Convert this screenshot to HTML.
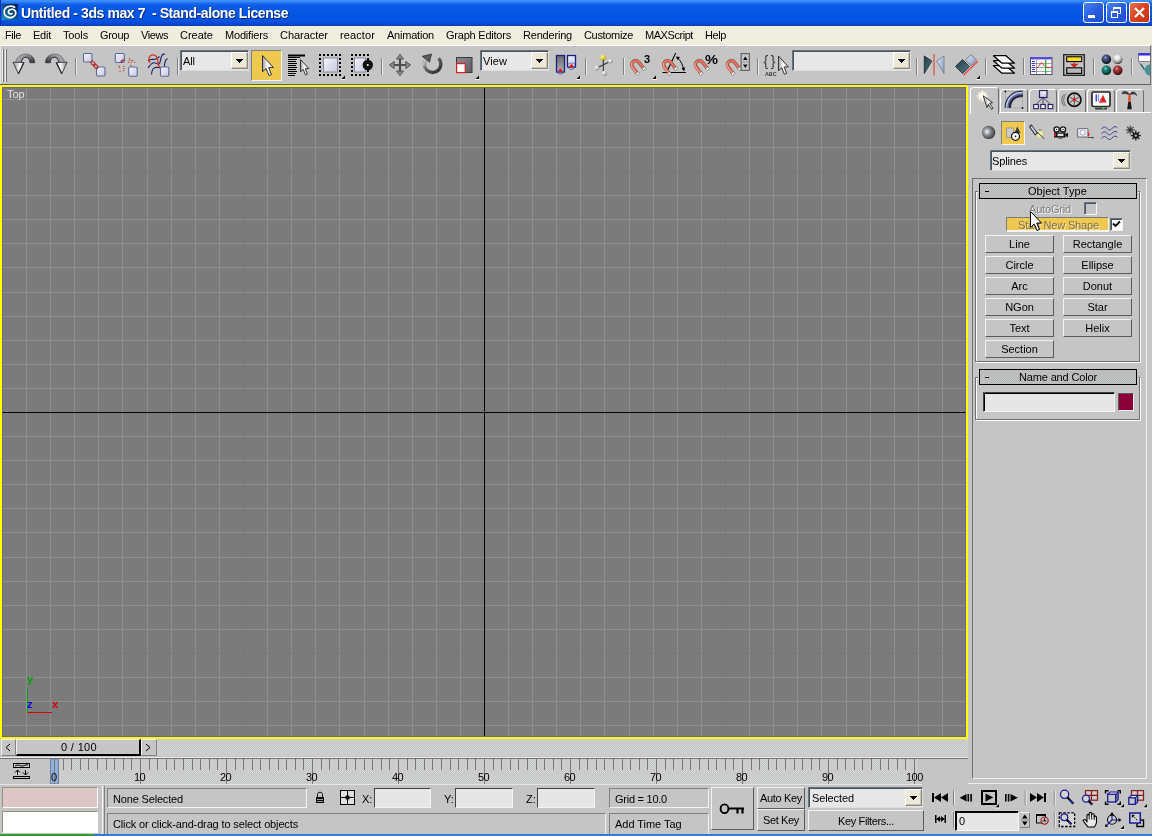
<!DOCTYPE html><html><head><meta charset="utf-8"><title>Untitled - 3ds max 7</title><style>
*{box-sizing:border-box;margin:0;padding:0}
html,body{width:1152px;height:836px;overflow:hidden}
body{background:#c5c5c5;font-family:"Liberation Sans",sans-serif;font-size:11px;color:#000;position:relative}
.a{position:absolute}
.t,.btn,svg{will-change:transform}
.t{position:absolute;white-space:nowrap;line-height:13px;height:13px}
#title{left:0;top:0;width:1152px;height:26px;background:linear-gradient(to bottom,#3f90fc 0,#3888f6 1.5px,#1a68ec 3.5px,#0a5ae6 6px,#0654e2 17px,#0652e2 21px,#0849d0 24px,#0a3cb4 26px);box-shadow:inset 1px 0 0 #0a2cc4}
#title .tt{left:21px;top:5px;font-weight:bold;font-size:13px;color:#fff;line-height:16px;height:16px;text-shadow:1px 1px 0 #0a2a80}
#menu{left:0;top:26px;width:1152px;height:19px;background:#efeddd}
#menu .t{top:3px}
#tb{left:0;top:45px;width:1151px;height:40px;background:#c5c5c5;border-top:1px solid #fff;border-bottom:1px solid #62626e;border-right:1px solid #6e6e6e}
.sep{position:absolute;width:2px;border-left:1px solid #808080;border-right:1px solid #e8e8e8}
.dd{position:absolute;background:#e7e7e7;border:1px solid;border-color:#68707a #dcdcdc #dcdcdc #68707a;box-shadow:inset 1px 1px 0 #4c545e}
.dd .b{position:absolute;right:0;top:1px;bottom:1px;width:17px;background:#ece9d8;border:1px solid;border-color:#fff #8a8878 #8a8878 #fff;box-shadow:inset -1px -1px 0 #c8c4b0}
.dd .b:after{content:"";position:absolute;left:4px;top:6px;width:7px;height:4px;background:linear-gradient(#000,#000) 0 0/7px 1px no-repeat,linear-gradient(#000,#000) 1px 1px/5px 1px no-repeat,linear-gradient(#000,#000) 2px 2px/3px 1px no-repeat,linear-gradient(#000,#000) 3px 3px/1px 1px no-repeat}
.dd .t{left:4px;top:3px}
.btn{position:absolute;background:#c5c5c5;border:1px solid;border-color:#f2f2f2 #5a5a5a #5a5a5a #f2f2f2;text-align:center;line-height:15px;white-space:nowrap}
.fld{position:absolute;background:#e6e6e6;border:1px solid;border-color:#404040 #f4f4f4 #f4f4f4 #404040}
.box{position:absolute;border:1px solid;border-color:#808080 #f2f2f2 #f2f2f2 #808080}
</style></head><body>
<div id="title" class="a"><div class="t" style="left:21px;top:5px;letter-spacing:-0.412px;font-size:14px;font-weight:bold;color:#fff;line-height:17px;height:17px;text-shadow:1px 1px 0 #0a2a80">Untitled - 3ds max 7&nbsp; - Stand-alone License</div>
<svg class="a" style="left:2px;top:4px" width="16" height="16" viewBox="0 0 16 16"><defs><linearGradient id="ig" x1="1" y1="0" x2="0" y2="1"><stop offset="0" stop-color="#0a1658"/><stop offset="0.5" stop-color="#10508a"/><stop offset="1" stop-color="#1c9ab4"/></linearGradient></defs><rect width="16" height="16" fill="url(#ig)"/><path d="M12.5 3.2C10 1.6 5.5 1.8 3.2 4.6 1.2 7.2 2 11.2 5 12.8 8 14.4 12 13.4 13.4 10.6 14.4 8.4 13.4 6 11 5.4 8.6 4.8 6.2 6.2 6.4 8.2 6.6 9.8 8.6 10.4 10 9.6" fill="none" stroke="#fff" stroke-width="1.7" stroke-linecap="round"/></svg>
<div class="a" style="left:1083px;top:2px;width:21px;height:21px;border:1px solid #fff;border-radius:3px;background:linear-gradient(135deg,#4a82f0 0,#2a5fe0 50%,#1f4fd0 100%)"><div class="a" style="left:4px;top:12px;width:7px;height:3px;background:#fff"></div></div><div class="a" style="left:1106px;top:2px;width:21px;height:21px;border:1px solid #fff;border-radius:3px;background:linear-gradient(135deg,#4a82f0 0,#2a5fe0 50%,#1f4fd0 100%)"><svg class="a" style="left:0;top:0" width="19" height="19"><path d="M6.5 7.5V4.5H13.5V10.5H10.5" fill="none" stroke="#fff" stroke-width="1"/><path d="M6 5H14" stroke="#fff" stroke-width="2"/><rect x="4.5" y="8.5" width="6" height="6" fill="none" stroke="#fff"/><path d="M4 9H11" stroke="#fff" stroke-width="2"/></svg></div><div class="a" style="left:1129px;top:2px;width:21px;height:21px;border:1px solid #fff;border-radius:3px;background:linear-gradient(135deg,#e8714f 0,#d8421c 50%,#c2350f 100%)"><svg class="a" style="left:0;top:0" width="19" height="19"><path d="M5 5L14 14M14 5L5 14" stroke="#fff" stroke-width="2.2"/></svg></div>
</div>
<div id="menu" class="a">
<div class="t" style="left:5px;top:3px;letter-spacing:-0.434px;">File</div>
<div class="t" style="left:33px;top:3px;letter-spacing:-0.242px;">Edit</div>
<div class="t" style="left:63px;top:3px;letter-spacing:-0.138px;">Tools</div>
<div class="t" style="left:100px;top:3px;letter-spacing:-0.316px;">Group</div>
<div class="t" style="left:141px;top:3px;letter-spacing:-0.431px;">Views</div>
<div class="t" style="left:180px;top:3px;letter-spacing:-0.005px;">Create</div>
<div class="t" style="left:225px;top:3px;letter-spacing:-0.181px;">Modifiers</div>
<div class="t" style="left:280px;top:3px;letter-spacing:-0.033px;">Character</div>
<div class="t" style="left:340px;top:3px;letter-spacing:0.107px;">reactor</div>
<div class="t" style="left:387px;top:3px;letter-spacing:-0.214px;">Animation</div>
<div class="t" style="left:446px;top:3px;letter-spacing:-0.221px;">Graph Editors</div>
<div class="t" style="left:523px;top:3px;letter-spacing:-0.196px;">Rendering</div>
<div class="t" style="left:584px;top:3px;letter-spacing:-0.330px;">Customize</div>
<div class="t" style="left:645px;top:3px;letter-spacing:-0.441px;">MAXScript</div>
<div class="t" style="left:705px;top:3px;letter-spacing:-0.406px;">Help</div>
</div>
<div id="tb" class="a">
<div class="a" style="left:0;top:0;width:1px;height:38px;background:#e6e6e6"></div><div class="a" style="left:2px;top:3px;width:2px;height:33px;border-left:1px solid #f0f0f0;border-right:1px solid #707070"></div><div class="a" style="left:5px;top:3px;width:2px;height:33px;border-left:1px solid #f0f0f0;border-right:1px solid #707070"></div>
<div class="sep" style="left:75px;top:12px;height:17px"></div>
<div class="sep" style="left:177px;top:12px;height:17px"></div>
<div class="sep" style="left:381px;top:12px;height:17px"></div>
<div class="sep" style="left:585px;top:12px;height:17px"></div>
<div class="sep" style="left:623px;top:12px;height:17px"></div>
<div class="sep" style="left:757px;top:12px;height:17px"></div>
<div class="sep" style="left:916px;top:12px;height:17px"></div>
<div class="sep" style="left:985px;top:12px;height:17px"></div>
<div class="sep" style="left:1023px;top:12px;height:17px"></div>
<div class="sep" style="left:1093px;top:12px;height:17px"></div>
<div class="sep" style="left:1131px;top:12px;height:17px"></div>
<div class="a" style="left:251px;top:4px;width:31px;height:31px;background:#efc84f;border:1px solid;border-color:#808080 #f6f6f6 #f6f6f6 #808080"></div>
</div>
<div class="dd" style="left:180px;top:50px;width:69px;height:21px"><div class="b"></div></div>
<div class="dd" style="left:480px;top:50px;width:69px;height:21px"><div class="b"></div></div>
<div class="dd" style="left:792px;top:50px;width:119px;height:21px"><div class="b"></div></div>
<div class="t" style="left:183px;top:55px;letter-spacing:-0.078px;">All</div>
<div class="t" style="left:483px;top:55px;letter-spacing:0.086px;">View</div>
<svg class="a" style="left:0;top:46px" width="1150" height="38" viewBox="0 46 1150 38">
<defs><linearGradient id="lav" x1="0" y1="0" x2="1" y2="1"><stop offset="0" stop-color="#f4f4fb"/><stop offset="1" stop-color="#c8cae0"/></linearGradient><linearGradient id="curg" x1="0" y1="0" x2="1" y2="0"><stop offset="0" stop-color="#9a9a9a"/><stop offset="0.45" stop-color="#ffffff"/><stop offset="1" stop-color="#d0d0d0"/></linearGradient><linearGradient id="ug" x1="1" y1="0.6" x2="0" y2="0.2"><stop offset="0" stop-color="#3c3c44"/><stop offset="0.35" stop-color="#7a7a80"/><stop offset="0.7" stop-color="#a4a4a8"/><stop offset="1" stop-color="#909094"/></linearGradient><linearGradient id="rg" x1="0" y1="0" x2="1" y2="0"><stop offset="0" stop-color="#3a3a3a"/><stop offset="0.5" stop-color="#7a7a7a"/><stop offset="1" stop-color="#b0b0b0"/></linearGradient><linearGradient id="ahg" x1="0" y1="0" x2="1" y2="0"><stop offset="0" stop-color="#8a8a8a"/><stop offset="0.35" stop-color="#c8c8cc"/><stop offset="0.65" stop-color="#ffffff"/><stop offset="1" stop-color="#9a9a9a"/></linearGradient><linearGradient id="rotg" x1="0" y1="0" x2="1" y2="1"><stop offset="0" stop-color="#b8b8b8"/><stop offset="0.5" stop-color="#5a5a5a"/><stop offset="1" stop-color="#2a2a2a"/></linearGradient><linearGradient id="scg" x1="0" y1="0" x2="1" y2="1"><stop offset="0" stop-color="#8c8c94"/><stop offset="1" stop-color="#5c5c64"/></linearGradient><linearGradient id="pvg" x1="0" y1="0" x2="0" y2="1"><stop offset="0" stop-color="#6a6a6a"/><stop offset="1" stop-color="#b0b0b0"/></linearGradient><radialGradient id="ballw" cx="0.35" cy="0.3" r="0.8"><stop offset="0" stop-color="#fff"/><stop offset="0.6" stop-color="#c0c0c0"/><stop offset="1" stop-color="#606060"/></radialGradient><radialGradient id="bally" cx="0.35" cy="0.3" r="0.8"><stop offset="0" stop-color="#fff8a0"/><stop offset="0.6" stop-color="#e8d020"/><stop offset="1" stop-color="#907800"/></radialGradient><radialGradient id="sph1" cx="0.4" cy="0.32" r="0.7"><stop offset="0" stop-color="#b0bce8"/><stop offset="0.2" stop-color="#52608e"/><stop offset="0.6" stop-color="#2c3654"/><stop offset="1" stop-color="#0a0c14"/></radialGradient><radialGradient id="sph2" cx="0.42" cy="0.3" r="0.72"><stop offset="0" stop-color="#ffffff"/><stop offset="0.4" stop-color="#e0e0e0"/><stop offset="0.75" stop-color="#8a8a8a"/><stop offset="1" stop-color="#1a1a1a"/></radialGradient><radialGradient id="sph3" cx="0.4" cy="0.32" r="0.7"><stop offset="0" stop-color="#66e4d4"/><stop offset="0.25" stop-color="#1e8c7e"/><stop offset="0.65" stop-color="#0e5a50"/><stop offset="1" stop-color="#021814"/></radialGradient><radialGradient id="sph4" cx="0.4" cy="0.32" r="0.7"><stop offset="0" stop-color="#ff9a9a"/><stop offset="0.25" stop-color="#b04040"/><stop offset="0.65" stop-color="#742424"/><stop offset="1" stop-color="#1c0404"/></radialGradient><linearGradient id="teal" x1="0" y1="0" x2="1" y2="1"><stop offset="0" stop-color="#1c3a44"/><stop offset="1" stop-color="#5a8088"/></linearGradient><linearGradient id="ltb" x1="0" y1="0" x2="1" y2="1"><stop offset="0" stop-color="#e0e8f8"/><stop offset="1" stop-color="#8a9ab8"/></linearGradient></defs>
<g><path d="M34.900 62.900C34.900 57.500 31 54 25.700 54C20.500 54 16.500 57.500 15.500 62.500L21.300 62.600C21.600 59.500 23.200 57.200 25.700 57.200C28.500 57.200 30.100 59.500 30.100 62.900Z" fill="url(#ug)" stroke="#4a4a52" stroke-width="0.500"/><path d="M21.300 62.600C21.600 59.500 23.200 57.200 25.700 57.200C28.500 57.200 30.100 59.500 30.100 62.900" fill="none" stroke="#2a2a30" stroke-width="0.900"/><path d="M13 62.200L24 62.500L18.400 73.800Z" fill="url(#ahg)" stroke="#3a3a40" stroke-width="0.900" stroke-linejoin="round"/><path d="M24 62.500L18.400 73.800" stroke="#222" stroke-width="1.100"/></g>
<g transform="translate(80.2 0) scale(-1 1)"><path d="M34.900 62.900C34.900 57.500 31 54 25.700 54C20.500 54 16.500 57.500 15.500 62.500L21.300 62.600C21.600 59.500 23.200 57.200 25.700 57.200C28.500 57.200 30.100 59.500 30.100 62.900Z" fill="url(#ug)" stroke="#4a4a52" stroke-width="0.500"/><path d="M21.300 62.600C21.600 59.500 23.200 57.200 25.700 57.200C28.500 57.200 30.100 59.500 30.100 62.900" fill="none" stroke="#2a2a30" stroke-width="0.900"/><path d="M13 62.200L24 62.500L18.400 73.800Z" fill="url(#ahg)" stroke="#3a3a40" stroke-width="0.900" stroke-linejoin="round"/><path d="M24 62.500L18.400 73.800" stroke="#222" stroke-width="1.100"/></g>
<rect x="83.5" y="53.5" width="8.5" height="8.5" rx="1.200" fill="url(#lav)" stroke="#5a6898" stroke-width="1.100"/><rect x="96.5" y="67" width="8.5" height="9" rx="1.200" fill="url(#lav)" stroke="#5a6898" stroke-width="1.100"/>
<g fill="none" stroke="#b02828" stroke-width="1.100"><ellipse cx="93" cy="63.300" rx="2.600" ry="1.500" transform="rotate(48 93 63.300)"/><ellipse cx="95.800" cy="66.400" rx="2.600" ry="1.500" transform="rotate(48 95.800 66.400)"/></g>
<rect x="115.3" y="53.5" width="9" height="9" rx="1.200" fill="url(#lav)" stroke="#5a6898" stroke-width="1.100"/><rect x="128.7" y="67" width="8.5" height="9.3" rx="1.200" fill="url(#lav)" stroke="#5a6898" stroke-width="1.100"/>
<path d="M121 62.500C121.500 60.500 123 60 124.500 60.500" fill="none" stroke="#a02828" stroke-width="1.600"/>
<rect x="129.0" y="58.0" width="1.100" height="1.100" fill="#c03030"/>
<rect x="131.3" y="60.0" width="1.100" height="1.100" fill="#c03030"/>
<rect x="127.80000000000001" y="61.7" width="1.100" height="1.100" fill="#c03030"/>
<rect x="130.5" y="61.8" width="1.100" height="1.100" fill="#c03030"/>
<rect x="134.0" y="61.8" width="1.100" height="1.100" fill="#c03030"/>
<rect x="130.3" y="64.8" width="1.100" height="1.100" fill="#c03030"/>
<rect x="119.0" y="67.0" width="1.100" height="1.100" fill="#c03030"/>
<rect x="123.3" y="66.0" width="1.100" height="1.100" fill="#c03030"/>
<rect x="123.7" y="68.0" width="1.100" height="1.100" fill="#c03030"/>
<rect x="123.0" y="70.0" width="1.100" height="1.100" fill="#c03030"/>
<rect x="119.5" y="70.8" width="1.100" height="1.100" fill="#c03030"/>
<rect x="118.5" y="65.5" width="1.100" height="1.100" fill="#c03030"/>
<rect x="128.8" y="59.7" width="1.100" height="1.100" fill="#c03030"/>
<rect x="132.3" y="59.9" width="1.100" height="1.100" fill="#c03030"/>
<rect x="160.5" y="67" width="8.3" height="9.3" rx="1.200" fill="url(#lav)" stroke="#5a6898" stroke-width="1.100"/>
<path d="M148 61C150.500 58.500 153 59.800 155 59.300S158 57.500 159.500 56.500M148 68C150 65.500 151.500 62.800 154 62.700S157 64.300 158.500 64.300 160 62 161 58 162.500 54.500 165 54M151.500 74.500C152 71 152 68.500 154.500 67.700S158 67.700 160 67.700M164.500 66.500C164.500 62 165 60 167.500 58.500" fill="none" stroke="#1a1f6a" stroke-width="1.100"/>
<path d="M156.500 56.800C155 54 150.500 54.500 149.300 57.300S149.500 61.500 150 63M156.500 56.800C158.500 59 157.500 62 158.500 65.500L160 67" fill="none" stroke="#d83020" stroke-width="1.300"/>
<path d="M262.50 55.50L262.50 71.78L266.07 68.52L269.01 75.66L271.53 74.61L268.69 67.68L273.42 67.47Z" fill="url(#curg)" stroke="#333" stroke-width="1" stroke-linejoin="round"/>
<rect x="288" y="54.500" width="17" height="2" fill="#000"/>
<path d="M288 57.5H300M288 59.5H297M288 61.5H296M288 63.5H297M288 65.5H296M288 67.5H297M288 69.5H296M288 71.5H297M288 73.5H296M288 75.5H295" stroke="#000" stroke-width="1.100" fill="none"/>
<path d="M300.50 59.50L300.50 71.90L303.22 69.42L305.46 74.86L307.38 74.06L305.22 68.78L308.82 68.62Z" fill="url(#curg)" stroke="#333" stroke-width="1" stroke-linejoin="round"/>
<path d="M319 54h2v2h-2zM319 74h2v2h-2zM323 54h2v2h-2zM323 74h2v2h-2zM327 54h2v2h-2zM327 74h2v2h-2zM331 54h2v2h-2zM331 74h2v2h-2zM335 54h2v2h-2zM335 74h2v2h-2zM339 54h2v2h-2zM339 74h2v2h-2zM319 58h2v2h-2zM339 58h2v2h-2zM319 62h2v2h-2zM339 62h2v2h-2zM319 66h2v2h-2zM339 66h2v2h-2zM319 70h2v2h-2zM339 70h2v2h-2z" fill="#000" shape-rendering="crispEdges"/>
<rect x="323.500" y="58" width="14" height="14" fill="url(#lav)" stroke="#8a8aa0" stroke-width="1"/>
<path d="M345 79L345 75.5L341.5 79Z" fill="#000"/><path d="M341.2 79.5L345.5 79.5" stroke="#fff" stroke-width="0.8"/>
<path d="M351 54h2v2h-2zM351 74h2v2h-2zM355 54h2v2h-2zM355 74h2v2h-2zM359 54h2v2h-2zM359 74h2v2h-2zM363 54h2v2h-2zM363 74h2v2h-2zM367 54h2v2h-2zM367 74h2v2h-2zM351 58h2v2h-2zM367 58h2v2h-2zM351 62h2v2h-2zM367 62h2v2h-2zM351 66h2v2h-2zM367 66h2v2h-2zM351 70h2v2h-2zM367 70h2v2h-2z" fill="#000" shape-rendering="crispEdges"/>
<rect x="354.500" y="58" width="11" height="14" fill="url(#lav)" stroke="#8a8aa0" stroke-width="1"/>
<circle cx="367.800" cy="65" r="3.100" fill="#fff" stroke="#111" stroke-width="4.200"/>
<path d="M400 56V74M391 65H409" stroke="#4e4e4e" stroke-width="2.200" fill="none"/>
<path d="M400 54.300L403.500 59H396.500ZM400 75.700L403.500 71H396.500ZM389.500 65L394.200 61.500V68.500ZM410.500 65L405.800 61.500V68.500Z" fill="#8c8c8c" stroke="#4a4a4a" stroke-width="0.900" stroke-linejoin="round"/>
<path d="M426.500 58.500A8.300 8.300 0 1 0 438.500 58.300" fill="none" stroke="url(#rotg)" stroke-width="3.400"/>
<path d="M426.500 58.500A8.300 8.300 0 0 0 424 66" fill="none" stroke="#c8c8c8" stroke-width="1.200"/>
<path d="M422.300 56.300L431.500 54L429.500 62.200Z" fill="#5a5a5a" stroke="#333" stroke-width="0.800"/>
<rect x="456.500" y="57.500" width="15.500" height="15" fill="url(#scg)" stroke="#3a3a3a" stroke-width="1"/>
<rect x="456.600" y="63.600" width="8.600" height="9" fill="#fff" stroke="#d82020" stroke-width="1.200"/>
<path d="M479 79L479 75.5L475.5 79Z" fill="#000"/><path d="M475.2 79.5L479.5 79.5" stroke="#fff" stroke-width="0.8"/>

<rect x="556.500" y="55.500" width="8" height="16.500" fill="url(#pvg)" stroke="#1a1f80" stroke-width="1.300"/>
<path d="M556.500 71C558 75 563 75 564.500 71" fill="none" stroke="#3a4aa0" stroke-width="0.800"/>
<rect x="567.500" y="55.500" width="8" height="11.500" fill="url(#lav)" stroke="#1a1f80" stroke-width="1.300"/>
<path d="M567.500 66C569 70.500 574 70.500 575.500 66M568 64.500C570 62.500 573 62.500 575 64.500" fill="none" stroke="#3a4aa0" stroke-width="0.800"/>
<circle cx="560.500" cy="70.500" r="1.700" fill="#e81818"/><circle cx="571.500" cy="66" r="1.700" fill="#e81818"/>
<path d="M580 79L580 75.5L576.5 79Z" fill="#000"/><path d="M576.2 79.5L580.5 79.5" stroke="#fff" stroke-width="0.8"/>
<path d="M603.300 58V73M597 68L610 61.500" stroke="#333" stroke-width="1.100" fill="none"/>
<circle cx="603" cy="57.500" r="2.700" fill="url(#bally)"/><circle cx="610.300" cy="61.300" r="2.300" fill="url(#ballw)"/><circle cx="596.800" cy="68" r="2.400" fill="url(#ballw)"/><circle cx="604.300" cy="73.300" r="2.500" fill="url(#ballw)"/>
<g transform="translate(634.3 62.9) rotate(-38) scale(0.88)"><path d="M-4.500 11V2.500A4.500 4.500 0 0 1 4.500 2.500V11" fill="none" stroke="#8a3a30" stroke-width="3.800"/><path d="M-4.500 11V2.500A4.500 4.500 0 0 1 4.500 2.500V11" fill="none" stroke="#e87462" stroke-width="2.500"/><path d="M-5.200 10V2.500A5.200 5.200 0 0 1 -2 -2" fill="none" stroke="#f6b0a0" stroke-width="1"/><rect x="-6.300" y="10.500" width="3.600" height="2.600" fill="#fff" stroke="#555" stroke-width="0.600"/><rect x="2.700" y="10.500" width="3.600" height="2.600" fill="#fff" stroke="#555" stroke-width="0.600"/></g>
<path d="M656 79L656 75.5L652.5 79Z" fill="#000"/><path d="M652.2 79.5L656.5 79.5" stroke="#fff" stroke-width="0.8"/>
<text x="644" y="62.500" font-family="Liberation Sans,sans-serif" font-size="11" font-weight="bold" fill="#000">3</text>
<path d="M662.500 72.500H686M666.500 72.500L675.700 53" stroke="#000" stroke-width="1.100" fill="none"/><path d="M677.500 58C681 61 683 65 683.500 69.500" stroke="#000" stroke-width="1" fill="none"/><path d="M676 56.500L680 57L677.500 60ZM684 71.500L681.500 68L685.300 67.500Z" fill="#000"/>
<g transform="translate(666.2 62.9) rotate(-38) scale(0.88)"><path d="M-4.500 11V2.500A4.500 4.500 0 0 1 4.500 2.500V11" fill="none" stroke="#8a3a30" stroke-width="3.800"/><path d="M-4.500 11V2.500A4.500 4.500 0 0 1 4.500 2.500V11" fill="none" stroke="#e87462" stroke-width="2.500"/><path d="M-5.200 10V2.500A5.200 5.200 0 0 1 -2 -2" fill="none" stroke="#f6b0a0" stroke-width="1"/><rect x="-6.300" y="10.500" width="3.600" height="2.600" fill="#fff" stroke="#555" stroke-width="0.600"/><rect x="2.700" y="10.500" width="3.600" height="2.600" fill="#fff" stroke="#555" stroke-width="0.600"/></g>
<g transform="translate(698.0 62.9) rotate(-38) scale(0.88)"><path d="M-4.500 11V2.500A4.500 4.500 0 0 1 4.500 2.500V11" fill="none" stroke="#8a3a30" stroke-width="3.800"/><path d="M-4.500 11V2.500A4.500 4.500 0 0 1 4.500 2.500V11" fill="none" stroke="#e87462" stroke-width="2.500"/><path d="M-5.200 10V2.500A5.200 5.200 0 0 1 -2 -2" fill="none" stroke="#f6b0a0" stroke-width="1"/><rect x="-6.300" y="10.500" width="3.600" height="2.600" fill="#fff" stroke="#555" stroke-width="0.600"/><rect x="2.700" y="10.500" width="3.600" height="2.600" fill="#fff" stroke="#555" stroke-width="0.600"/></g>
<text x="705" y="63.800" font-family="Liberation Sans,sans-serif" font-size="13.500" textLength="13" lengthAdjust="spacingAndGlyphs" font-weight="bold" fill="#000">%</text>
<g transform="translate(730.0 62.9) rotate(-38) scale(0.88)"><path d="M-4.500 11V2.500A4.500 4.500 0 0 1 4.500 2.500V11" fill="none" stroke="#8a3a30" stroke-width="3.800"/><path d="M-4.500 11V2.500A4.500 4.500 0 0 1 4.500 2.500V11" fill="none" stroke="#e87462" stroke-width="2.500"/><path d="M-5.200 10V2.500A5.200 5.200 0 0 1 -2 -2" fill="none" stroke="#f6b0a0" stroke-width="1"/><rect x="-6.300" y="10.500" width="3.600" height="2.600" fill="#fff" stroke="#555" stroke-width="0.600"/><rect x="2.700" y="10.500" width="3.600" height="2.600" fill="#fff" stroke="#555" stroke-width="0.600"/></g>
<rect x="741" y="53.500" width="8.500" height="17" fill="#9a9a9a" stroke="#555" stroke-width="0.800"/><rect x="742" y="54.500" width="6.500" height="7" fill="#c8c8c8"/><rect x="742" y="62.500" width="6.500" height="7" fill="#c8c8c8"/><path d="M743 60L745.300 56.500L747.600 60ZM743 64.500L745.300 68L747.600 64.500Z" fill="#000"/>
<text x="763.500" y="66" font-family="Liberation Sans,sans-serif" font-size="14" fill="#3a3a3a" letter-spacing="2.5">{}</text>
<text x="765" y="75.500" font-family="Liberation Sans,sans-serif" font-size="6" font-weight="bold" fill="#3a3a3a" textLength="11.500" lengthAdjust="spacingAndGlyphs">ABC</text>
<path d="M778.50 56.00L778.50 70.72L781.73 67.78L784.39 74.24L786.67 73.29L784.11 67.02L788.38 66.83Z" fill="url(#curg)" stroke="#333" stroke-width="1" stroke-linejoin="round"/>
<path d="M924.300 56V73.500L931.800 61Z" fill="url(#teal)" stroke="#10242a" stroke-width="0.800"/>
<path d="M944 56V73.500L936.600 61Z" fill="url(#ltb)" stroke="#6a7a90" stroke-width="0.800"/>
<path d="M934 54V75.500" stroke="#e05050" stroke-width="1.300"/>
<path d="M962.500 59.500L969.500 66.500L962.500 73.500L955.500 66.500Z" fill="url(#teal)" stroke="#16282e" stroke-width="0.800"/>
<path d="M971 54.500L976.500 60L971 65.500L965.500 60Z" fill="url(#ltb)" stroke="#55657a" stroke-width="0.800"/>
<path d="M963.500 75.300L977.800 61.200" stroke="#f04040" stroke-width="1.300"/>
<path d="M980 79L980 75.5L976.5 79Z" fill="#000"/><path d="M976.2 79.5L980.5 79.5" stroke="#fff" stroke-width="0.8"/>
<path d="M993.500 65.7H1006L1014.500 73.2H1002Z" fill="#fff" stroke="#000" stroke-width="1.300" stroke-linejoin="round"/>
<path d="M993.500 60.7H1006L1014.500 68.2H1002Z" fill="#fff" stroke="#000" stroke-width="1.300" stroke-linejoin="round"/>
<path d="M993.500 55.7H1006L1014.500 63.2H1002Z" fill="#fff" stroke="#000" stroke-width="1.300" stroke-linejoin="round"/>
<rect x="1030.500" y="57.500" width="21.500" height="17" fill="#fff" stroke="#4a4a6a" stroke-width="1"/>
<rect x="1030.500" y="57" width="21.500" height="2.400" fill="#5a48e0"/>
<path d="M1036.500 59.500V74M1031 63.500H1052M1031 67.500H1052M1031 71.500H1052" stroke="#7a7a8a" stroke-width="0.700" fill="none"/>
<path d="M1032 61.500H1035M1032 63.500H1035M1032 65.500H1035M1032 67.500H1035M1032 69.500H1035M1032 71.500H1035" stroke="#2a2ad0" stroke-width="0.900"/>
<path d="M1037 68L1041.500 62.500L1045 66.500L1048 67.500H1052" stroke="#d83030" stroke-width="1" fill="none"/>
<path d="M1045.700 59.500V74" stroke="#20b020" stroke-width="1.200"/>
<rect x="1063.700" y="54.700" width="20.600" height="20.600" fill="#c5c5c5" stroke="#2a2a2a" stroke-width="1.400"/>
<rect x="1066.700" y="56.800" width="15" height="4.800" fill="#ffe020" stroke="#000" stroke-width="1.100"/>
<rect x="1066.700" y="67.800" width="15" height="5.600" fill="#b8b8b8" stroke="#000" stroke-width="1.100"/>
<path d="M1074.200 62.500V65M1071.500 64.300H1077L1074.200 67Z" stroke="#d02020" stroke-width="1.200" fill="#d02020"/>
<circle cx="1106.400" cy="59.300" r="4.800" fill="url(#sph1)"/><circle cx="1117.700" cy="59.300" r="4.800" fill="url(#sph2)"/><circle cx="1106.400" cy="70.300" r="4.800" fill="url(#sph3)"/><circle cx="1117.700" cy="70.300" r="4.800" fill="url(#sph4)"/>
<rect x="1138.500" y="53.500" width="14" height="8" fill="#fff" stroke="#6a6a7a" stroke-width="0.800"/><rect x="1138.500" y="53.200" width="14" height="2.300" fill="#3a28e0"/>
<path d="M1141 64.500C1142.500 66 1143 68 1144.500 69.500" stroke="#2a5a60" stroke-width="1.500" fill="none"/><ellipse cx="1152" cy="70" rx="7.500" ry="6" fill="#4a9098"/><path d="M1141 64.500L1139.500 63.500" stroke="#2a5a60" stroke-width="1"/>
</svg>
<div class="a" style="left:0;top:85px;width:968px;height:654px;background:#ffff00"></div>
<svg class="a" style="left:2px;top:87px" width="964" height="650" viewBox="2 87 964 650" shape-rendering="crispEdges"><rect x="2" y="87" width="964" height="650" fill="#7b7b7b"/><path d="M26.5 87V737M50.5 87V737M74.5 87V737M98.5 87V737M122.5 87V737M147.5 87V737M171.5 87V737M195.5 87V737M219.5 87V737M267.5 87V737M291.5 87V737M315.5 87V737M339.5 87V737M364.5 87V737M388.5 87V737M412.5 87V737M436.5 87V737M460.5 87V737M508.5 87V737M532.5 87V737M556.5 87V737M580.5 87V737M604.5 87V737M629.5 87V737M653.5 87V737M677.5 87V737M701.5 87V737M749.5 87V737M773.5 87V737M797.5 87V737M821.5 87V737M846.5 87V737M870.5 87V737M894.5 87V737M918.5 87V737M942.5 87V737M2 99.5H966M2 123.5H966M2 147.5H966M2 195.5H966M2 219.5H966M2 243.5H966M2 267.5H966M2 292.5H966M2 316.5H966M2 340.5H966M2 364.5H966M2 388.5H966M2 436.5H966M2 460.5H966M2 484.5H966M2 508.5H966M2 532.5H966M2 557.5H966M2 581.5H966M2 605.5H966M2 629.5H966M2 677.5H966M2 701.5H966M2 725.5H966" stroke="#8f8f8f" stroke-width="1" fill="none"/><path d="M2.5 87V737M243.5 87V737M725.5 87V737M2 171.5H966M2 653.5H966" stroke="#77747f" stroke-width="1" fill="none" stroke-dasharray="2 1"/><path d="M484.5 87V737M2 412.5H966" stroke="#000" stroke-width="1" fill="none"/><path d="M2.5 87V737M2 87.5H966M965.5 87V737M2 736.5H966" stroke="#6c6c80" stroke-width="1" fill="none"/></svg>
<div class="t" style="left:7px;top:88px;color:#e0e0e0">Top</div>
<svg class="a" style="left:24px;top:674px" width="40" height="44" viewBox="24 674 40 44" shape-rendering="crispEdges"><path d="M27.5 688V713" stroke="#00a000" fill="none"/><path d="M28 712.5H52" stroke="#d40000" fill="none"/></svg>
<div class="t" style="left:27px;top:673px;letter-spacing:-1.125px;font-weight:bold;color:#00a000">y</div><div class="t" style="left:27px;top:698px;letter-spacing:-0.500px;font-weight:bold;color:#0000dc">z</div><div class="t" style="left:52px;top:698px;letter-spacing:-1.125px;font-weight:bold;color:#d40000">x</div>
<div class="a" style="left:972px;top:178px;width:175px;height:601px;border:1px solid;border-color:#707070 #f0f0f0 #f0f0f0 #707070"></div>
<div class="a" style="left:999px;top:112px;width:152px;height:1px;background:#fff"></div>
<div class="a" style="left:970px;top:87px;width:29px;height:27px;background:#c5c5c5;border:1px solid;border-color:#fff #6e6e6e transparent #fff;border-radius:4px 4px 0 0;border-bottom:0"></div>
<div class="a" style="left:1000px;top:89px;width:28px;height:23px;border:1px solid;border-color:#fff #6e6e6e transparent #fff;border-radius:4px 4px 0 0;border-bottom:0"></div>
<div class="a" style="left:1029px;top:89px;width:28px;height:23px;border:1px solid;border-color:#fff #6e6e6e transparent #fff;border-radius:4px 4px 0 0;border-bottom:0"></div>
<div class="a" style="left:1058px;top:89px;width:28px;height:23px;border:1px solid;border-color:#fff #6e6e6e transparent #fff;border-radius:4px 4px 0 0;border-bottom:0"></div>
<div class="a" style="left:1087px;top:89px;width:28px;height:23px;border:1px solid;border-color:#fff #6e6e6e transparent #fff;border-radius:4px 4px 0 0;border-bottom:0"></div>
<div class="a" style="left:1116px;top:89px;width:28px;height:23px;border:1px solid;border-color:#fff #6e6e6e transparent #fff;border-radius:4px 4px 0 0;border-bottom:0"></div>
<div class="a" style="left:1001px;top:121px;width:24px;height:24px;background:#efc84f;border:1px solid;border-color:#808080 #f4f4f4 #f4f4f4 #808080"></div>
<svg class="a" style="left:968px;top:86px" width="184" height="62" viewBox="968 86 184 62">
<defs><radialGradient id="spark" cx="0.5" cy="0.5" r="0.5"><stop offset="0" stop-color="#ffffff"/><stop offset="0.5" stop-color="#fffbe0" stop-opacity="0.9"/><stop offset="1" stop-color="#f0e8c0" stop-opacity="0"/></radialGradient><linearGradient id="tube" x1="0" y1="0" x2="1" y2="1"><stop offset="0" stop-color="#c0c8e8"/><stop offset="0.35" stop-color="#6a78a8"/><stop offset="0.7" stop-color="#1c2240"/><stop offset="1" stop-color="#5a6898"/></linearGradient><radialGradient id="gsph" cx="0.38" cy="0.44" r="0.62"><stop offset="0" stop-color="#ffffff"/><stop offset="0.18" stop-color="#c4c8d0"/><stop offset="0.5" stop-color="#7e8286"/><stop offset="0.85" stop-color="#505050"/><stop offset="1" stop-color="#3a3a3a"/></radialGradient><radialGradient id="glow" cx="0.5" cy="0.5" r="0.5"><stop offset="0" stop-color="#fffce0"/><stop offset="0.6" stop-color="#f4ec90" stop-opacity="0.9"/><stop offset="1" stop-color="#e8e080" stop-opacity="0"/></radialGradient><linearGradient id="lav2" x1="0" y1="0" x2="0" y2="1"><stop offset="0" stop-color="#f4f4fb"/><stop offset="1" stop-color="#c4c6dc"/></linearGradient><linearGradient id="curg2" x1="0" y1="0" x2="1" y2="0"><stop offset="0" stop-color="#b0b0b0"/><stop offset="0.5" stop-color="#ffffff"/><stop offset="1" stop-color="#d8d8d8"/></linearGradient></defs>
<circle cx="982.500" cy="96" r="6" fill="url(#spark)"/>
<path d="M982.500 90V102M976.500 96H988.500M978.500 92L986.500 100M986.500 92L978.500 100" stroke="#fffdf0" stroke-width="0.900" opacity="0.900"/>
<g transform="translate(983.2 95.8) rotate(-18) scale(0.8 1)"><path d="M0.00 0.00L0.00 12.40L2.72 9.92L4.96 15.36L6.88 14.56L4.72 9.28L8.32 9.12Z" fill="url(#curg2)" stroke="#333" stroke-width="1" stroke-linejoin="round"/></g>
<rect x="1005.500" y="91.500" width="17" height="16.500" fill="none" stroke="#6a6a6a" stroke-width="0.500" stroke-dasharray="1 1"/>
<rect x="1004.500" y="90.700" width="1.600" height="1.600" fill="#000"/><rect x="1021.700" y="107.200" width="1.600" height="1.600" fill="#000"/>
<path d="M1007.800 107.800C1007.800 99 1014 93.800 1022.700 93.800" fill="none" stroke="#181c30" stroke-width="6.400"/>
<path d="M1007.800 107.800C1007.800 99 1014 93.800 1022.700 93.800" fill="none" stroke="#5a6490" stroke-width="4.800"/>
<path d="M1006.600 107.800C1006.600 98.300 1013.300 92.500 1022.700 92.500" fill="none" stroke="#c0c8e8" stroke-width="1.500"/>
<path d="M1009.600 107.800C1009.600 100.500 1015 95.600 1022.700 95.600" fill="none" stroke="#1c2038" stroke-width="1.400"/>
<path d="M1043 97.500L1036 104.500M1043 97.500V104.500M1043 97.500L1050.500 104.500" stroke="#2a2060" stroke-width="0.800" fill="none"/>
<rect x="1039.500" y="90.500" width="7.500" height="7" fill="url(#lav2)" stroke="#2a2060" stroke-width="1.200"/>
<rect x="1033.7" y="104.500" width="4.600" height="4.200" fill="#f0f0f8" stroke="#2a2060" stroke-width="1.100"/>
<rect x="1040.7" y="104.500" width="4.600" height="4.200" fill="#f0f0f8" stroke="#2a2060" stroke-width="1.100"/>
<rect x="1048.2" y="104.500" width="4.600" height="4.200" fill="#f0f0f8" stroke="#2a2060" stroke-width="1.100"/>
<path d="M1066 93.500C1063 97 1063 103 1066 106.500M1063.500 94.500C1061.300 98 1061.300 102 1063.500 105.500" stroke="#555" stroke-width="0.800" fill="none"/>
<circle cx="1074.300" cy="99.800" r="6.600" fill="#c8c8c8" stroke="#111" stroke-width="1.700"/>
<path d="M1074.300 94.500V105M1069.700 97.200L1078.900 102.400M1069.700 102.400L1078.900 97.200" stroke="#333" stroke-width="0.800"/>
<circle cx="1074.300" cy="99.800" r="1.700" fill="#e02020"/>
<rect x="1092" y="92" width="18" height="14.500" rx="1.500" fill="#fff" stroke="#2a2a2a" stroke-width="1.700"/>
<rect x="1095.500" y="94.500" width="1.500" height="7" fill="#3a4ae0"/><rect x="1097.800" y="94.500" width="1.300" height="7" fill="#8a98f0"/>
<path d="M1103 94.800L1106.500 102.500H1099.300Z" fill="#e82020"/><path d="M1101 98L1103 102.500H1099Z" fill="#f04040"/>
<rect x="1095" y="107.700" width="12" height="1.800" fill="#3a3a3a"/><rect x="1102" y="107.600" width="2.400" height="1.400" fill="#20d040"/>
<path d="M1122.300 92.500C1123.500 91 1126 91.200 1127.500 92.300L1131.500 92.300C1134 91.500 1136 92.500 1136.800 95.500C1135 93.800 1133.500 93.800 1131.500 94.300L1127.500 94.300C1126 93.300 1124 93.300 1122.300 94Z" fill="#3a3a48" stroke="#2a2a34" stroke-width="0.600"/>
<rect x="1128.400" y="91.200" width="2.400" height="2" fill="#e8e8e8"/>
<path d="M1128.400 94.300H1130.600L1130.800 102H1128.200Z" fill="#e04a20"/>
<path d="M1128.200 102H1130.800L1131.800 109.300H1127.200Z" fill="#181818"/>
<circle cx="988.600" cy="132.400" r="6.700" fill="url(#gsph)"/>
<rect x="1006.500" y="128" width="7" height="9.500" fill="#c8c8d0" stroke="#8a8a6a" stroke-width="0.700"/>
<path d="M1017.300 126.500L1020.500 133H1014.500Z" fill="#3a3a48"/>
<circle cx="1015.500" cy="136.300" r="4" fill="#fff" stroke="#111" stroke-width="1.200"/><circle cx="1015.500" cy="136.300" r="0.800" fill="#000"/>
<circle cx="1039.500" cy="134" r="4.500" fill="url(#glow)"/>
<path d="M1030.500 126L1036.500 134.500" stroke="#2a2a3a" stroke-width="3.600"/><path d="M1031 126.500L1036 133.500" stroke="#d0d4e8" stroke-width="1.800"/>
<path d="M1029.500 126.500L1032 124.800" stroke="#2a2a3a" stroke-width="1.200"/>
<path d="M1036 131L1044.300 138.800" stroke="#2a2a3a" stroke-width="0.900"/><path d="M1038.500 130H1041.500" stroke="#6a6a90" stroke-width="1"/>
<circle cx="1056.600" cy="129.400" r="2.600" fill="#fff" stroke="#111" stroke-width="1.300"/><circle cx="1063" cy="129.400" r="2.600" fill="#fff" stroke="#111" stroke-width="1.300"/>
<circle cx="1056.600" cy="129.400" r="0.700" fill="#111"/><circle cx="1063" cy="129.400" r="0.700" fill="#111"/>
<rect x="1054" y="132.500" width="11.500" height="5" fill="#111"/><rect x="1057.500" y="133.700" width="6" height="2.400" fill="#e0e0e0"/><rect x="1054.200" y="133.300" width="1.800" height="3" fill="#e02020"/>
<path d="M1065.500 134L1068 132.800V137.200L1065.500 136Z" fill="#111"/><rect x="1058.500" y="137.500" width="4" height="1.300" fill="#555"/>
<rect x="1077.500" y="128.500" width="10.500" height="8.700" rx="1" fill="#e4e6f0" stroke="#7a7a7a" stroke-width="1.200"/>
<circle cx="1082.700" cy="132.500" r="2.600" fill="#f4f6ff" stroke="#a0a4c0" stroke-width="0.900"/>
<rect x="1087.800" y="132.500" width="1.500" height="3.500" fill="#e82020"/><path d="M1088 137.500H1093" stroke="#444" stroke-width="0.900"/><rect x="1092.300" y="136.900" width="1.200" height="1.600" fill="#333"/>
<path d="M1101.500 129.0C1103.500 126.3 1105 126.5 1107 128.5S1110 130.5 1112 128.5 1115.500 126.0 1117.300 127.5" fill="none" stroke="#2a3488" stroke-width="0.900"/>
<path d="M1101.500 133.8C1103.500 131.10000000000002 1105 131.3 1107 133.3S1110 135.3 1112 133.3 1115.500 130.8 1117.300 132.3" fill="none" stroke="#2a3488" stroke-width="0.900"/>
<path d="M1101.500 138.5C1103.500 135.8 1105 136 1107 138S1110 140 1112 138 1115.500 135.5 1117.300 137" fill="none" stroke="#2a3488" stroke-width="0.900"/>
<g><path d="M1130.30 130.00L1134.90 130.00" stroke="#5a5a5a" stroke-width="1.300"/><path d="M1130.30 130.00L1133.55 133.25" stroke="#5a5a5a" stroke-width="1.300"/><path d="M1130.30 130.00L1130.30 134.60" stroke="#5a5a5a" stroke-width="1.300"/><path d="M1130.30 130.00L1127.05 133.25" stroke="#5a5a5a" stroke-width="1.300"/><path d="M1130.30 130.00L1125.70 130.00" stroke="#5a5a5a" stroke-width="1.300"/><path d="M1130.30 130.00L1127.05 126.75" stroke="#5a5a5a" stroke-width="1.300"/><path d="M1130.30 130.00L1130.30 125.40" stroke="#5a5a5a" stroke-width="1.300"/><path d="M1130.30 130.00L1133.55 126.75" stroke="#5a5a5a" stroke-width="1.300"/><circle cx="1130.3" cy="130" r="2.8" fill="#5a5a5a"/><circle cx="1130.3" cy="130" r="1.200" fill="#1a1a1a"/></g>
<g><path d="M1135.80 135.60L1140.80 135.60" stroke="#1c1c1c" stroke-width="1.300"/><path d="M1135.80 135.60L1139.34 139.14" stroke="#1c1c1c" stroke-width="1.300"/><path d="M1135.80 135.60L1135.80 140.60" stroke="#1c1c1c" stroke-width="1.300"/><path d="M1135.80 135.60L1132.26 139.14" stroke="#1c1c1c" stroke-width="1.300"/><path d="M1135.80 135.60L1130.80 135.60" stroke="#1c1c1c" stroke-width="1.300"/><path d="M1135.80 135.60L1132.26 132.06" stroke="#1c1c1c" stroke-width="1.300"/><path d="M1135.80 135.60L1135.80 130.60" stroke="#1c1c1c" stroke-width="1.300"/><path d="M1135.80 135.60L1139.34 132.06" stroke="#1c1c1c" stroke-width="1.300"/><circle cx="1135.8" cy="135.6" r="3.2" fill="#1c1c1c"/><circle cx="1135.8" cy="135.6" r="1.200" fill="#b0b8d8"/></g>
</svg>
<div class="dd" style="left:990px;top:150px;width:141px;height:21px"><div class="b"></div></div>
<div class="t" style="left:992px;top:155px;letter-spacing:-0.154px;">Splines</div>
<div class="a" style="left:976px;top:192px;width:165px;height:171px;border:1px solid #fff"></div>
<div class="a" style="left:975px;top:191px;width:165px;height:171px;border:1px solid #707070"></div>
<svg class="a" style="left:978px;top:182px" width="160" height="18"><rect x="0" y="0" width="160" height="18" fill="#c5c5c5"/><rect x="1.500" y="1.500" width="157" height="15" fill="url(#dz3)" stroke="#000" stroke-width="1"/></svg>
<div class="a" style="left:985px;top:191px;width:4px;height:1px;background:#000"></div>
<div class="t" style="left:1028px;top:185px;letter-spacing:0.027px;">Object Type</div>
<div class="a" style="left:976px;top:378px;width:165px;height:43px;border:1px solid #fff"></div>
<div class="a" style="left:975px;top:377px;width:165px;height:43px;border:1px solid #707070"></div>
<svg class="a" style="left:978px;top:368px" width="160" height="18"><rect x="0" y="0" width="160" height="18" fill="#c5c5c5"/><rect x="1.500" y="1.500" width="157" height="15" fill="url(#dz3)" stroke="#000" stroke-width="1"/></svg>
<div class="a" style="left:985px;top:377px;width:4px;height:1px;background:#000"></div>
<div class="t" style="left:1019px;top:371px;letter-spacing:-0.150px;">Name and Color</div>
<div class="t" style="left:1029px;top:203px;letter-spacing:-0.178px;color:#808080;text-shadow:1px 1px 0 #f4f4f4">AutoGrid</div>
<div class="a" style="left:1084px;top:202px;width:13px;height:13px;border:1px solid;border-color:#68707a #f4f4f4 #f4f4f4 #68707a;box-shadow:inset 1px 1px 0 #4c545e"></div>
<div class="a" style="left:1006px;top:217px;width:103px;height:15px;background:#efc84f;border:1px solid;border-color:#7a7a7a #f4f4f4 #f4f4f4 #7a7a7a;border-bottom-width:2px"></div>
<div class="t" style="left:1018px;top:219px;letter-spacing:-0.144px;color:#7d6d4d;text-shadow:1px 1px 0 #f8e8a8">Start New Shape</div>
<div class="a" style="left:1110px;top:218px;width:13px;height:13px;background:#fff;border:1px solid;border-color:#68707a #f4f4f4 #f4f4f4 #68707a;box-shadow:inset 1px 1px 0 #4c545e"><svg class="a" style="left:1px;top:1px" width="9" height="9"><path d="M1 3.5L3.500 6L8 1.500" stroke="#000" stroke-width="1.800" fill="none"/></svg></div>
<div class="btn" style="left:985px;top:235px;width:69px;height:18px;line-height:17px">Line</div>
<div class="btn" style="left:1063px;top:235px;width:69px;height:18px;line-height:17px">Rectangle</div>
<div class="btn" style="left:985px;top:256px;width:69px;height:18px;line-height:17px">Circle</div>
<div class="btn" style="left:1063px;top:256px;width:69px;height:18px;line-height:17px">Ellipse</div>
<div class="btn" style="left:985px;top:277px;width:69px;height:18px;line-height:17px">Arc</div>
<div class="btn" style="left:1063px;top:277px;width:69px;height:18px;line-height:17px">Donut</div>
<div class="btn" style="left:985px;top:298px;width:69px;height:18px;line-height:17px">NGon</div>
<div class="btn" style="left:1063px;top:298px;width:69px;height:18px;line-height:17px">Star</div>
<div class="btn" style="left:985px;top:319px;width:69px;height:18px;line-height:17px">Text</div>
<div class="btn" style="left:1063px;top:319px;width:69px;height:18px;line-height:17px">Helix</div>
<div class="btn" style="left:985px;top:340px;width:69px;height:18px;line-height:17px">Section</div>
<div class="fld" style="left:983px;top:392px;width:132px;height:20px;box-shadow:inset 1px 1px 0 #000"></div>
<div class="a" style="left:1118px;top:393px;width:16px;height:18px;background:#8b0038;border:1px solid;border-color:#5a5a5a #f0f0f0 #f0f0f0 #5a5a5a"></div>
<svg class="a" style="left:1030px;top:211px" width="14" height="22"><path d="M0.500 0.500V16.500L4.200 13L7 19.500L9.500 18.400L6.700 12H11.500Z" fill="#fff" stroke="#000" stroke-width="1"/></svg>
<div class="a" style="left:0;top:739px;width:968px;height:18px;background:#c5c5c5"></div>
<svg class="a" style="left:157px;top:739px" width="811" height="17"><defs><pattern id="dz" width="2" height="2" patternUnits="userSpaceOnUse"><rect width="2" height="2" fill="#c5c5c5"/><rect width="1" height="1" fill="#d2d6d2"/><rect x="1" y="1" width="1" height="1" fill="#d2d6d2"/></pattern><pattern id="dz3" width="2" height="2" patternUnits="userSpaceOnUse"><rect width="2" height="2" fill="#c5c5c5"/><rect width="1" height="1" fill="#b2b6b6"/><rect x="1" y="1" width="1" height="1" fill="#b2b6b6"/></pattern><pattern id="dz2" width="2" height="2" patternUnits="userSpaceOnUse"><rect width="2" height="2" fill="#c5c5c5"/><rect width="1" height="1" fill="#e8e8e8"/><rect x="1" y="1" width="1" height="1" fill="#e8e8e8"/></pattern></defs><rect width="811" height="17" fill="url(#dz)"/></svg>
<div class="a" style="left:0;top:757px;width:968px;height:1px;background:#ececec"></div>
<div class="btn" style="left:1px;top:739px;width:15px;height:17px;border-color:#f2f2f2 #808080 #808080 #f2f2f2"></div>
<div class="btn" style="left:141px;top:739px;width:16px;height:17px;border-color:#f2f2f2 #808080 #808080 #f2f2f2"></div>
<svg class="a" style="left:4px;top:742px" width="8" height="11"><path d="M6 2L2 5.500L6 9" fill="none" stroke="#000" stroke-width="1"/></svg>
<svg class="a" style="left:144px;top:742px" width="8" height="11"><path d="M2 2L6 5.500L2 9" fill="none" stroke="#000" stroke-width="1"/></svg>
<div class="a" style="left:16px;top:739px;width:125px;height:17px;background:#c5c5c5;border:1px solid;border-color:#f2f2f2 #000 #000 #f2f2f2;border-bottom-width:2px;border-right-width:2px"></div>
<div class="t" style="left:61px;top:741px;letter-spacing:0.337px;">0 / 100</div>
<div class="a" style="left:0;top:758px;width:968px;height:1px;background:#707070"></div>
<svg class="a" style="left:50px;top:759px" width="868" height="25" viewBox="50 759 868 25"><rect x="50" y="759" width="868" height="25" fill="url(#dz)"/>
<rect x="50.500" y="759" width="8" height="25" fill="#8fb0d8" stroke="#7080a0" stroke-width="1"/>
<path d="M54.5 759V784M63.5 759V770M71.5 759V770M80.5 759V770M88.5 759V770M97.5 759V770M106.5 759V770M114.5 759V770M123.5 759V770M131.5 759V770M140.5 759V784M149.5 759V770M157.5 759V770M166.5 759V770M174.5 759V770M183.5 759V770M192.5 759V770M200.5 759V770M209.5 759V770M217.5 759V770M226.5 759V784M235.5 759V770M243.5 759V770M252.5 759V770M260.5 759V770M269.5 759V770M278.5 759V770M286.5 759V770M295.5 759V770M303.5 759V770M312.5 759V784M321.5 759V770M329.5 759V770M338.5 759V770M346.5 759V770M355.5 759V770M364.5 759V770M372.5 759V770M381.5 759V770M389.5 759V770M398.5 759V784M407.5 759V770M415.5 759V770M424.5 759V770M432.5 759V770M441.5 759V770M450.5 759V770M458.5 759V770M467.5 759V770M475.5 759V770M484.5 759V784M493.5 759V770M501.5 759V770M510.5 759V770M518.5 759V770M527.5 759V770M536.5 759V770M544.5 759V770M553.5 759V770M561.5 759V770M570.5 759V784M579.5 759V770M587.5 759V770M596.5 759V770M604.5 759V770M613.5 759V770M622.5 759V770M630.5 759V770M639.5 759V770M647.5 759V770M656.5 759V784M665.5 759V770M673.5 759V770M682.5 759V770M690.5 759V770M699.5 759V770M708.5 759V770M716.5 759V770M725.5 759V770M733.5 759V770M742.5 759V784M751.5 759V770M759.5 759V770M768.5 759V770M776.5 759V770M785.5 759V770M794.5 759V770M802.5 759V770M811.5 759V770M819.5 759V770M828.5 759V784M837.5 759V770M845.5 759V770M854.5 759V770M862.5 759V770M871.5 759V770M880.5 759V770M888.5 759V770M897.5 759V770M905.5 759V770M914.5 759V784" stroke="#787878" stroke-width="1" fill="none" shape-rendering="crispEdges"/></svg>
<div class="t" style="left:51px;top:771px;letter-spacing:-0.525px;">0</div>
<div class="t" style="left:134px;top:771px;letter-spacing:-0.525px;">10</div>
<div class="t" style="left:220px;top:771px;letter-spacing:-0.525px;">20</div>
<div class="t" style="left:306px;top:771px;letter-spacing:-0.525px;">30</div>
<div class="t" style="left:392px;top:771px;letter-spacing:-0.525px;">40</div>
<div class="t" style="left:478px;top:771px;letter-spacing:-0.525px;">50</div>
<div class="t" style="left:564px;top:771px;letter-spacing:-0.525px;">60</div>
<div class="t" style="left:650px;top:771px;letter-spacing:-0.525px;">70</div>
<div class="t" style="left:736px;top:771px;letter-spacing:-0.525px;">80</div>
<div class="t" style="left:822px;top:771px;letter-spacing:-0.525px;">90</div>
<div class="t" style="left:906px;top:771px;letter-spacing:-0.520px;">100</div>
<div class="a" style="left:0;top:784px;width:922px;height:1px;background:#e4e4e4"></div>
<div class="a" style="left:968px;top:783px;width:184px;height:1px;background:#ececec"></div>
<svg class="a" style="left:13px;top:763px" width="18" height="17" shape-rendering="crispEdges"><rect x="0.500" y="0.500" width="16" height="4" fill="none" stroke="#000"/><path d="M2 3C5 1 7 3 9 3S13 1 15 2" fill="none" stroke="#000" shape-rendering="auto"/><rect x="0.500" y="13.500" width="16" height="2" fill="none" stroke="#000"/><path d="M4.500 7V12M12.500 7V12M2 9.500L4.500 7L7 9.500M10 9.500L12.500 12L15 9.500" fill="none" stroke="#000" shape-rendering="auto"/></svg>
<div class="a" style="left:2px;top:787px;width:96px;height:21px;background:#dec6c6;border:1px solid;border-color:#9a9080 #fff #fff #9a9080"></div>
<div class="a" style="left:2px;top:811px;width:96px;height:22px;background:#fff;border:1px solid;border-color:#9a9080 #fff #fff #9a9080"></div>
<div class="a" style="left:102px;top:786px;width:3px;height:48px;border-left:1px solid #f4f4f4;border-right:1px solid #808080"></div>
<div class="box" style="left:107px;top:788px;width:200px;height:20px"></div>
<div class="t" style="left:113px;top:793px;letter-spacing:-0.167px;">None Selected</div>
<div class="box" style="left:107px;top:813px;width:499px;height:22px"></div>
<div class="t" style="left:113px;top:818px;letter-spacing:-0.140px;">Click or click-and-drag to select objects</div>
<svg class="a" style="left:315px;top:791px" width="10" height="13"><path d="M2.500 6V3.500C2.500 0.500 7.500 0.500 7.500 3.500V6" fill="none" stroke="#000"/><rect x="1" y="6" width="8" height="6" fill="#000"/><path d="M2 8.500H8M2 10.500H8" stroke="#c5c5c5" stroke-width="0.800"/></svg>
<svg class="a" style="left:340px;top:790px" width="16" height="16" shape-rendering="crispEdges"><rect x="0.500" y="0.500" width="14" height="14" fill="#e0e0e0" stroke="#000"/><path d="M7.500 1V14M1 7.500H14" stroke="#000"/><circle cx="7.500" cy="7.500" r="2.300" fill="#000" shape-rendering="auto"/></svg>
<div class="t" style="left:362px;top:793px;letter-spacing:-0.203px;">X:</div>
<div class="fld" style="left:374px;top:788px;width:57px;height:20px"></div>
<div class="t" style="left:444px;top:793px;letter-spacing:0.102px;">Y:</div>
<div class="fld" style="left:455px;top:788px;width:58px;height:20px"></div>
<div class="t" style="left:526px;top:793px;letter-spacing:0.109px;">Z:</div>
<div class="fld" style="left:537px;top:788px;width:58px;height:20px"></div>
<div class="box" style="left:609px;top:788px;width:100px;height:20px"></div>
<div class="t" style="left:615px;top:793px;letter-spacing:-0.249px;">Grid = 10.0</div>
<div class="box" style="left:609px;top:813px;width:100px;height:22px"></div>
<div class="t" style="left:615px;top:818px;letter-spacing:-0.039px;">Add Time Tag</div>
<div class="btn" style="left:711px;top:787px;width:43px;height:43px"></div>
<svg class="a" style="left:719px;top:802px" width="27" height="14"><ellipse cx="5.500" cy="6.700" rx="3.900" ry="4.300" fill="none" stroke="#000" stroke-width="1.900"/><path d="M9.500 6.500H25M18.500 6.500V11.500M23.500 6.500V11.500" stroke="#000" stroke-width="2.200" fill="none"/></svg>
<div class="btn" style="left:757px;top:787px;width:48px;height:22px"></div>
<div class="btn" style="left:757px;top:809px;width:48px;height:22px"></div>
<div class="t" style="left:760px;top:792px;letter-spacing:-0.330px;">Auto Key</div>
<div class="t" style="left:763px;top:814px;letter-spacing:-0.362px;">Set Key</div>
<div class="dd" style="left:808px;top:787px;width:115px;height:21px"><div class="b"></div></div>
<div class="t" style="left:812px;top:792px;letter-spacing:-0.102px;">Selected</div>
<div class="btn" style="left:808px;top:810px;width:116px;height:21px"></div>
<div class="t" style="left:838px;top:815px;letter-spacing:-0.366px;">Key Filters...</div>
<div class="fld" style="left:955px;top:811px;width:64px;height:20px;border-color:#000 #f4f4f4 #f4f4f4 #000;box-shadow:inset 1px 1px 0 #000"></div>
<div class="t" style="left:959px;top:815px;letter-spacing:-0.125px;">0</div>
<div class="a" style="left:1020px;top:812px;width:10px;height:16px;background:#c5c5c5;border-right:1px solid #808080;border-bottom:1px solid #808080;border-top:1px solid #f0f0f0"></div>
<svg class="a" style="left:1020px;top:812px" width="10" height="16"><path d="M2 6.500L4.800 2.500L7.600 6.500ZM2 9.500L4.800 13.500L7.600 9.500Z" fill="#000"/><path d="M0.500 8H9" stroke="#808080" stroke-width="0.700"/></svg>
<svg class="a" style="left:926px;top:786px" width="226" height="48" viewBox="926 786 226 48">
<path d="M953.5 790.5V805.5" stroke="#808080" stroke-width="1"/><path d="M954.5 790.5V805.5" stroke="#eaeaea" stroke-width="1"/>
<path d="M1025.2 790.5V805.5" stroke="#808080" stroke-width="1"/><path d="M1026.2 790.5V805.5" stroke="#eaeaea" stroke-width="1"/>
<path d="M1054.3 790.5V805.5" stroke="#808080" stroke-width="1"/><path d="M1055.3 790.5V805.5" stroke="#eaeaea" stroke-width="1"/>
<path d="M953.5 812V827.5" stroke="#808080" stroke-width="1"/><path d="M954.5 812V827.5" stroke="#eaeaea" stroke-width="1"/>
<path d="M1054.3 812V827.5" stroke="#808080" stroke-width="1"/><path d="M1055.3 812V827.5" stroke="#eaeaea" stroke-width="1"/>
<rect x="932" y="793" width="2" height="9" fill="#000"/><path d="M941 793V802L934 797.500ZM948 793V802L941 797.500Z" fill="#000"/>
<path d="M966.500 794V801.500L959.700 797.700Z" fill="#000"/><rect x="967.500" y="794" width="1.600" height="7.500" fill="#000"/><rect x="970.300" y="794" width="1.600" height="7.500" fill="#000"/>
<rect x="982" y="791" width="14" height="13" fill="#c5c5c5" stroke="#000" stroke-width="2"/><path d="M985.500 793.500V801.500L993.300 797.500Z" fill="#000"/>
<path d="M999 807.5L999 804.0L995.5 807.5Z" fill="#000"/><path d="M995.2 808.0L999.5 808.0" stroke="#fff" stroke-width="0.8"/>
<rect x="1005" y="794" width="1.600" height="7.500" fill="#000"/><rect x="1007.800" y="794" width="1.600" height="7.500" fill="#000"/><path d="M1010.500 794V801.500L1017.800 797.700Z" fill="#000"/>
<path d="M1030 793V802L1037 797.500ZM1037 793V802L1044 797.500Z" fill="#000"/><rect x="1044" y="793" width="2" height="9" fill="#000"/>
<rect x="935" y="815" width="1.500" height="8" fill="#000"/><rect x="944.500" y="815" width="1.500" height="8" fill="#000"/><path d="M936.500 819H944.500" stroke="#000" stroke-width="1.200"/><path d="M936.500 819L940 816V822ZM944.500 819L941 816V822Z" fill="#000"/>
<rect x="1036.500" y="814.500" width="9" height="8.500" fill="#c5c5c5" stroke="#000" stroke-width="1"/><rect x="1036" y="814" width="10" height="2" fill="#000"/>
<circle cx="1044.600" cy="820.600" r="3.600" fill="#c5c5c5" stroke="#a01818" stroke-width="1.100"/><path d="M1044.600 818V821H1046.500M1042.500 821H1044.600" stroke="#000" stroke-width="0.900" fill="none"/>
<circle cx="1064.6" cy="794.3" r="4.1" fill="#d4d4d4" stroke="#1a1a98" stroke-width="1.300"/><path d="M1067.37 797.32L1073.30 803.80" stroke="#000" stroke-width="2.200"/><path d="M1069.40 799.54L1072.96 803.43" stroke="#2a3ae0" stroke-width="1.100"/>
<rect x="1085.5" y="790.6" width="12" height="9.6" fill="#cfcfcf" stroke="#8a1a1a" stroke-width="1.200"/><path d="M1091.5 790.6V800.2M1085.5 795.4H1097.5" stroke="#8a1a1a" stroke-width="1.200"/>
<circle cx="1086" cy="798.6" r="3.5" fill="#d4d4d4" stroke="#1a1a98" stroke-width="1.300"/><path d="M1088.53 801.01L1092.30 804.60" stroke="#000" stroke-width="2.200"/><path d="M1090.71 803.08L1091.94 804.26" stroke="#2a3ae0" stroke-width="1.100"/>
<path d="M1105.500 793.500V790.800H1108.500M1117.500 790.800H1120.300V793.500M1120.300 801.500V804.300H1117.500M1108.500 804.300H1105.500V801.500" fill="none" stroke="#000" stroke-width="1.400"/>
<path d="M1107.7 794.3L1110.0 792.0H1118.0V799.7L1115.7 802.0Z" fill="#e8e8e8" stroke="#1a1a98" stroke-width="1.100"/><path d="M1115.7 794.3L1118.0 792.0V799.7L1115.7 802.0Z" fill="#909090" stroke="#1a1a98" stroke-width="1"/><rect x="1107.7" y="794.3" width="8" height="7.7" fill="#c8c8c8" stroke="#1a1a98" stroke-width="1.300"/>
<path d="M1124 807.5L1124 804.0L1120.5 807.5Z" fill="#000"/><path d="M1120.2 808.0L1124.5 808.0" stroke="#fff" stroke-width="0.8"/>
<rect x="1131.5" y="790.6" width="12" height="9.6" fill="#cfcfcf" stroke="#8a1a1a" stroke-width="1.200"/><path d="M1137.5 790.6V800.2M1131.5 795.4H1143.5" stroke="#8a1a1a" stroke-width="1.200"/>
<path d="M1128.8 797.8L1131.1 795.5H1137.6V802.0L1135.3 804.3Z" fill="#e8e8e8" stroke="#1a1a98" stroke-width="1.100"/><path d="M1135.3 797.8L1137.6 795.5V802.0L1135.3 804.3Z" fill="#909090" stroke="#1a1a98" stroke-width="1"/><rect x="1128.8" y="797.8" width="6.5" height="6.5" fill="#c8c8c8" stroke="#1a1a98" stroke-width="1.300"/>
<path d="M1147 807.5L1147 804.0L1143.5 807.5Z" fill="#000"/><path d="M1143.2 808.0L1147.5 808.0" stroke="#fff" stroke-width="0.8"/>
<rect x="1059.300" y="812.800" width="15.300" height="13.700" fill="url(#dz2)" stroke="#000" stroke-width="1.300" stroke-dasharray="2.500 1.500"/>
<circle cx="1064.3" cy="817.3" r="3.4" fill="#d4d4d4" stroke="#1a1a98" stroke-width="1.300"/><path d="M1066.74 819.67L1071.50 824.30" stroke="#000" stroke-width="2.200"/><path d="M1068.89 821.76L1071.14 823.95" stroke="#2a3ae0" stroke-width="1.100"/>
<path d="M1083 820.500C1084 819 1085.500 819.500 1086.500 821L1087 822V815.500C1087 814 1089 814 1089.200 815.500V813.500C1089.500 812 1091.500 812 1091.700 813.500V815C1092 813.200 1094 813.500 1094.200 815V817C1094.700 815.500 1096.500 816 1096.500 817.500V822C1096.500 824 1095.500 825.500 1094.500 827H1088C1086.500 825 1084.500 823 1083 820.500Z" fill="#e8e8e8" stroke="#000" stroke-width="1.100" stroke-linejoin="round"/><path d="M1089.200 815.500V819.500M1091.700 815V819.500M1094.200 817V820" stroke="#000" stroke-width="0.900"/>
<circle cx="1112" cy="819.800" r="4.500" fill="#d0d0d0" stroke="#000" stroke-width="1.100"/>
<path d="M1112 820V813.500M1112 820H1120M1112 820L1106 826" stroke="#1a1a98" stroke-width="1.200" fill="none"/>
<path d="M1112 812L1114 815H1110ZM1121.500 820L1118.500 818V822ZM1105 827L1105.500 824L1108 826.500Z" fill="#000"/>
<path d="M1124 829L1124 825.5L1120.5 829Z" fill="#000"/><path d="M1120.2 829.5L1124.5 829.5" stroke="#fff" stroke-width="0.8"/>
<rect x="1137" y="820" width="6.500" height="6.500" fill="#c5c5c5" stroke="#000" stroke-width="1.400"/>
<rect x="1129.800" y="813" width="10.500" height="10" fill="#d0d0d0" stroke="#1a1a98" stroke-width="1.500"/>
<path d="M1132.500 815.500L1138 821" stroke="#000" stroke-width="1" stroke-dasharray="1.500 1"/><path d="M1131.800 814.800H1135L1131.800 818Z" fill="#000"/>
</svg>
<div class="a" style="left:0;top:834px;width:94px;height:2px;background:#3a9a3a"></div><div class="a" style="left:94px;top:834px;width:1058px;height:2px;background:#3674e4"></div>
</body></html>
